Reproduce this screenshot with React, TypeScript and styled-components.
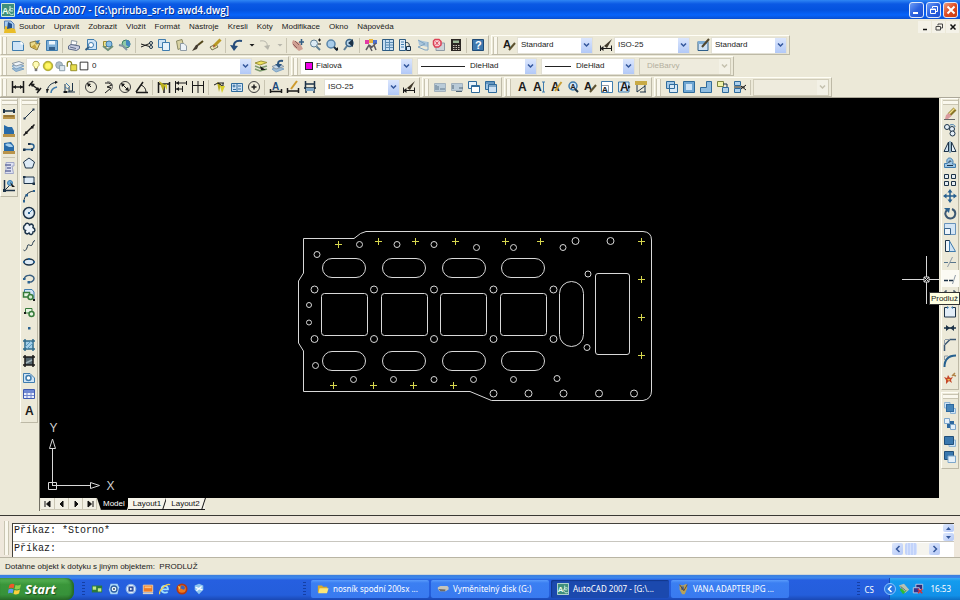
import React from "react";
import styled, { createGlobalStyle, css } from "styled-components";

const Global = createGlobalStyle`
  * { box-sizing: border-box; }
  body { margin: 0; background: #ece9d8; }
  button, select, input { font: inherit; color: inherit; margin: 0; }
`;

const ui = `"Noto Sans", "Open Sans", sans-serif`;
const classic = `"Liberation Sans", Arial, sans-serif`;

/* ---------- icons: 14 x 14 grid ---------- */
const N = "#1d3348";
const B = "#3f7cae";
const L = "#cfe4f6";
const K = "#1b1b1b";
const Y = "#d9cf2a";
const G = "#8e9aa5";

const S = ({ d, c = N, w = 1, f = "none" }: { d: string; c?: string; w?: number; f?: string }) => (
  <path d={d} stroke={c} strokeWidth={w} fill={f} />
);
const F = ({ d, c = N }: { d: string; c?: string }) => <path d={d} fill={c} />;
const T = ({ x, y = 11, s = 12, c = K, children }: { x: number; y?: number; s?: number; c?: string; children: string }) => (
  <text x={x} y={y} fontSize={s} fill={c} fontFamily="Liberation Sans" fontWeight="700">{children}</text>
);
const C = ({ x, y, r, c = N, f = "none", w = 1 }: { x: number; y: number; r: number; c?: string; f?: string; w?: number }) => (
  <circle cx={x} cy={y} r={r} stroke={c} strokeWidth={w} fill={f} />
);

const icons: Record<string, React.ReactNode> = {
  new: <><S d="M1.5 3.5H10L12.5 6V12.5H1.5Z" c={B} f={L} /><F d="M9.5 3L13 6.5H9.5Z" c="#fff" /></>,
  open: <><S d="M2 4.5L8 3V6L12 5L9 12L2.5 9Z" c="#8b7a3a" f="#eadb8c" /><F d="M7 3L12 2L10 6Z" c={B} /><F d="M3 9L7 6L9 11Z" c="#c9a63b" /></>,
  save: <><S d="M1.5 2.5H12.5V12.5H1.5Z" c={B} f="#7fb0d8" /><F d="M4 3H10V6.5H4Z" c="#eef6fd" /><F d="M4 9H10V12H4Z" c="#35618d" /></>,
  print: <><S d="M4.5 2.5L10 3.5L9 7H4Z" c={G} f="#fff" /><S d="M1.5 8L4 6.5L12.5 8V10.5L9.5 12.5L1.5 11Z" c="#5d6b88" f="#c8cce0" /><S d="M3 9L9 10.5" c="#5d6b88" /></>,
  preview: <><S d="M3.5 1.5H10L12.5 4V11.5H3.5Z" c={B} f={L} /><C x={7} y={7} r={2.5} c={B} f="#fff" /><S d="M5 9L1.5 12" w={2} c="#345d80" /></>,
  publish: <><S d="M2.5 3.5H10V8.5H2.5Z" c="#9b8b31" f="#efe38b" /><C x={8} y={6} r={3} c={B} f="#8ac0e5" /><S d="M2 8L7 12L12 8" w={2} c="#6d8f79" /></>,
  web: <><C x={8} y={6} r={4} c="#3d7f68" f="#8fc9a8" /><F d="M8 2A4 4 0 0 1 11 9L8 7Z" c="#4487c0" /><S d="M1 7L5 8L9 12" w={2} c="#8396a3" /></>,
  cut: <><C x={11} y={5} r={1.5} /><C x={11} y={9} r={1.5} /><S d="M9.5 5.5L1 9M9.5 8.5L1 6" c={K} /></>,
  copy: <><S d="M1.5 1.5H8.5V9.5H1.5Z" c={B} f={L} /><S d="M5.5 4.5H12.5V12.5H5.5Z" c={B} f="#e7f2fb" /></>,
  paste: <><S d="M2.5 3L8 1.5L10 9L4 11.5Z" c="#8c8b63" f="#d8d2a2" /><S d="M6.5 5.5H10L12.5 8V12.5H6.5Z" c={G} f="#edf3f8" /></>,
  brush: <><S d="M12 3L7 7" w={2} c="#53461b" /><F d="M8 6L6 11L1 13L5 7Z" c="#443c31" /></>,
  blockEdit: <><S d="M2 9L8 6L10 9L4 12Z" c="#74704c" f="#ede9ba" /><S d="M12.5 1.5L6 8" w={3} c="#b99922" /><F d="M5 8L7 7L6 10Z" c="#933" /></>,
  undo: <><S d="M12 3C5 2 3 5 4 11" c="#274d7b" w={2} /><F d="M0 7L8 8L4 13Z" c="#274d7b" /></>,
  redo: <><S d="M2 3C8 2 10 5 9 10" c="#b7b6ab" /><F d="M6 8L12 7L10 12Z" c="#b7b6ab" /></>,
  down: <F d="M4.5 6H9.5L7 8.5Z" c={K} />,
  downOff: <F d="M4.5 6H9.5L7 8.5Z" c="#b7b6ab" />,
  pan: <><F d="M2 2L9 5L12 11L8 13L3 9L1 5Z" c="#cf9f92" /><S d="M4 3L8 7M2 6L6 10" c="#8e5e5c" /><S d="M10.5 1V7M8 4H13" c="#335d83" w={1.5} /></>,
  zoomRt: <><C x={6} y={5.5} r={3.5} c="#5f7f95" f="#dcebf5" /><S d="M8.5 8.5L12 12" w={2} c="#5f7f95" /><S d="M10 2H13M11.5 .5V3.5M10 6H13" c={K} /></>,
  zoomWin: <><C x={6} y={6} r={4} c="#5b86aa" f="#a9cdea" w={1.5} /><S d="M9 9L12.5 12.5" w={2} /><F d="M10 12H13V9Z" c={K} /></>,
  zoomPrev: <><C x={7.5} y={5} r={3.5} c="#3b668a" f="#bcd9ee" w={1.5} /><S d="M5 8L2 12" w={2} c="#5f7f95" /><F d="M6 5L11 1V9Z" /></>,
  props: <><F d="M1 2H5V6H1Z" c="#e33aa6" /><F d="M5 1H9V5H5Z" c="#e8b53e" /><F d="M9 2H13V6H9Z" c="#4b6fd0" /><S d="M2 12L5 7L8 9L12 5M5 7L8 13M10 7L12 12" c="#5d5a60" w={1.5} /></>,
  design: <><S d="M1.5 1.5H12.5V12.5H1.5Z" c="#2c5b82" f="#c5ddf1" /><S d="M4.5 2V12M4.5 4.5H12M4.5 7H12M4.5 9.5H12M8.5 2V12" c="#5a8cb4" /></>,
  palettes: <><S d="M1.5 1.5H7.5V12.5H1.5Z" c="#2c5b82" f="#dcebf7" /><S d="M3 4H6M3 6.5H6M3 9H6" c={B} /><S d="M7 4.5C12 4 12 7 10 11" /><S d="M8.5 8.5H12.5V12.5H8.5Z" f="#cfe4f6" /></>,
  sheet: <><F d="M3 2L13 4V9L4 7Z" c="#a9c5db" /><S d="M3 2L10 6L3 9L10 12H13V4" c="#7ea3c0" /></>,
  markup: <><S d="M4 5H12.5V12.5H4Z" c={G} f="#cdd4d8" /><S d="M3 1.5H7L9 3.5V7L6.500 9H3L1.5 6.5V3Z" c="#dc4055" f="#fad1d5" w={1.5} /><S d="M3.5 3.5L6.500 7M6.500 3.500L3.500 7" c="#dc4055" /></>,
  calc: <><F d="M2 1H12V13H2Z" c="#2b2724" /><F d="M4 2.5H10V5H4Z" c="#9fbb9a" /><S d="M4 7.5H10.5M4 9.5H10.5M4 11.5H10.5" c="#c9c2b8" /><S d="M6 6V13M8.5 6V13" c="#2b2724" /></>,
  help: <><S d="M1.5 1.5H12.5V12.5H1.5Z" c="#1f4b77" f="#3f79ae" /><T x={4} y={11} s={11} c="#fff">?</T></>,
  styleA: <><T x={1} y={10} s={11}>A</T><S d="M13 5L7 12" w={2} c="#5c5230" /></>,
  dimStyle: <><S d="M1 10.5H13M1.5 7.5V13M12.5 7.5V13" c={K} /><F d="M13 1L5 8L8 10Z" c="#3f382a" /><F d="M1 10.5L4.5 8V13Z" c={K} /></>,
  tableStyle: <><S d="M2 3.5H12V12.5H2Z" c="#2d5e8a" f="#cfe2f3" /><F d="M2 3H12V6H2Z" c="#7fadd4" /><S d="M13 1L6 9" w={2} c="#51482f" /></>,
  layers: <><S d="M1 9.5L5 12.5L13 10L8 8Z" c="#7ea3c4" f="#9bbbd6" /><S d="M1 7L5 10L13 7L8 5Z" c="#7ea3c4" f="#c7dbed" /><S d="M1 4.5L5 7L13 4.5L8 2.5Z" c={G} f="#eff5fa" /></>,
  layerPrev: <><S d="M1 10L5 13L13 10L8 8Z" c="#7ea3c4" f="#9bbbd6" /><S d="M1 7.5L5 10L13 7.5L8 5Z" c={G} f="#c7dbed" /><S d="M12 2C7 1 6 4 8 7" c="#2d5680" w={2} /><F d="M4 5L11 5L8 9Z" c="#2d5680" /></>,
  layerCur: <><S d="M1 4L6 6L13 3.5L7 2Z" c="#9b943c" f="#f1e35c" /><S d="M1 7L6 9L13 7M1 10L6 12L13 10" c="#7c9a6d" w={1.5} /><F d="M6 7L12 11H7Z" c={K} /></>,
  bulb: <><S d="M7 1.5A3.5 3.5 0 0 1 9 8L8.5 10H5.5L5 8A3.5 3.5 0 0 1 7 1.5Z" c="#a79d45" f="#fffdb6" /><F d="M5.500 10H8.500V13H5.500Z" c="#777" /></>,
  sun: <><C x={7} y={7} r={5.5} c="#a9a127" f="#c7bf38" /><C x={7} y={7} r={3.5} c="#f8ef47" f="#fff66a" /></>,
  vpFreeze: <><C x={6} y={6} r={4} c="#8b9ca8" f="#aebfca" /><S d="M6.5 6.5H12.5V12.5H6.5Z" c="#7f94a4" f="#dce6ed" /></>,
  lock: <><S d="M1.5 8V4A2 2 0 0 1 6.5 4V6" c="#8a841f" w={1.5} /><S d="M5.5 5.5H12.5V12.5H5.5Z" c="#8a841f" f="#e7dc4b" /></>,
  layColor: <S d="M2.5 2.5H11.5V11.5H2.5Z" c={K} f="#fff" />,

  dimLinear: <><S d="M1.5 1V13M12.5 1V13M2 7H12" c={K} w={1.5} /><F d="M2 7L5 5V9ZM12 7L9 5V9Z" c={K} /></>,
  dimAligned: <><S d="M1 6L5 1M9 13L13 8M3 4L11 10" c={K} w={1.5} /><F d="M2 3L7 4L4 7ZM12 11L7 10L10 7Z" c={K} /></>,
  dimArc: <><S d="M2 13C2 6 6 3 12 2" /><S d="M6 13C6 10 8 8 12 7" c={B} w={1.5} /><F d="M1 9L4 9L2 13ZM10 1L13 2L10 4Z" c={K} /></>,
  dimOrd: <><S d="M3 4V12M1 12H13M7 7V12M10.500 3V11H7" /><S d="M4 3L8 7M3 7L6 9" c={B} /><F d="M2 11H5V13H2Z" c={K} /></>,
  dimRad: <><C x={7} y={7} r={5.5} c="#3b3b3b" /><S d="M7 7L3.5 3.5" c={K} /><F d="M3 3L7 4L4 7Z" c={K} /></>,
  dimJog: <><S d="M4 3H8L11 5L6 7L10 8L4 13" c={K} /><S d="M6 2C12 1 13 8 9 11" c="#555" /></>,
  dimDia: <><C x={7} y={7} r={5.5} c="#3b3b3b" /><S d="M3.5 3.5L10.5 10.5" c={K} /><F d="M3 3L7 4L4 7ZM11 11L7 10L10 7Z" c={K} /></>,
  dimAng: <><S d="M1 12.5H13M1 12L8 2" c={K} w={1.5} /><S d="M6 5C9 6 11 9 11 12" c={K} /></>,
  quickDim: <><S d="M1.5 2V13M12.5 2V13M7 5V13M2 4H12" c={K} w={1.5} /><F d="M2 1L8 5L6 11Z" c="#b9ae1c" /><F d="M7 5L10 4L10 10Z" c={Y} /></>,
  dimBase: <><S d="M1.5 1V13M12.5 1V5M2 3H12M2 9H8M8.5 6V12" c={K} /><F d="M2 9L5 7V11ZM2 3L5 1V5Z" c={K} /></>,
  dimCont: <S d="M1.5 1V13M7 1V13M12.5 1V13M2 5.5H12" c={K} />,
  leader: <><F d="M4 2L8 4L6 12Z" c="#b9ae1c" /><S d="M1 5L5 3L11 7M10 3V7M5 3L11 3" c={K} /><F d="M7 6L12 6L9 13Z" c={Y} /></>,
  tol: <><S d="M1.5 3.5H12.5V11.5H1.5ZM7 3.5V11.5" c="#2f6b9c" f="#cfe2f4" /><C x={4} y={6} r={1} c="#2f6b9c" /><S d="M3 9.5H6M8 6H11M8 9H11" c="#2f6b9c" /></>,
  centre: <><C x={7} y={7} r={5.5} c="#3b3b3b" /><S d="M7 4.5V9.5M4.5 7H9.5" c={K} w={1.5} /></>,
  dimEdit: <><T x={3} y={10} s={10} c="#1b4a7d">A</T><S d="M1 11.5H13M1.5 9V13M12.5 9V13" c={K} w={1.5} /></>,
  dimTedit: <><S d="M1.5 8V13M12.5 8V13M1 11H13" c={K} w={1.5} /><S d="M11 1L5 9" c="#cf9b2c" w={2} /></>,
  dimUpd: <><S d="M2.5 1V9M11.5 1V9M2 4H12M1 8H13M3 8V13M11 8V13" w={1.5} /><F d="M3 8H11V11H3Z" c="#7ea6c6" /></>,
  grpA: <><S d="M1.5 3.5H12.5V11.5H1.5Z" c="#a3b2bd" f="#b9cbd8" /><S d="M3 5V10M5 6V10M7 9H12" c="#60798c" /></>,
  grpB: <><S d="M1.5 3.5H12.5V10.5H1.5Z" c="#a3b2bd" f="#b9cbd8" /><S d="M3 5V9M6 11.5H12M9 8H13" c="#4f6476" /></>,
  grpC: <><S d="M1.5 1.5H9.5V8.5H1.5Z" c="#2f6b9c" f="#e6f1fa" /><S d="M4.5 5.5H12.5V12.5H4.5Z" c="#2f6b9c" f="#fff" /><S d="M5 6.5H12" c="#2f6b9c" /></>,
  grpD: <><S d="M1.5 1.5H10.5V9.5H1.5Z" c="#2f6b9c" f="#9ec3e2" /><S d="M4.5 4.5H12.5V12.5H4.5Z" c="#2f6b9c" f="#cde1f2" /><S d="M5 6H12M1.500 3H10" c="#2f6b9c" /></>,
  text: <T x={3} y={11} s={12}>A</T>,
  textLine: <><T x={1} y={11} s={12}>A</T><S d="M11.5 2V12M10 2H13M10 12H13" c={B} /></>,
  textEdit: <><T x={2} y={11} s={12}>A</T><S d="M12.5 2L6 11" c="#c9a035" w={2} /></>,
  textFind: <><C x={7} y={6} r={4} c={B} f={L} w={1.5} /><S d="M9 9L12 12" w={2} /><T x={4.5} y={9} s={7}>A</T></>,
  textScale: <><S d="M1.5 1.5H12.5V12.5H1.5Z" c={B} f="#fff" /><S d="M2 5.5H8.500V12" c={G} /><T x={2} y={12} s={8}>A</T></>,
  textJust: <><S d="M1.5 2V12H12V2Z" c={B} f="#dceaf6" /><T x={3} y={11} s={12}>A</T><F d="M11 5V9L13.500 7Z" c={K} /></>,
  spaceTr: <><F d="M1 1H13V5H1Z" c="#c8aa45" /><S d="M3 5V12M11 5V12M3 12L11 6M6 12H12" /></>,
  cornerA: <><S d="M1.5 1.5H9.5V8.5H1.5Z" c="#2f6b9c" f="#a3c9e8" /><S d="M4.5 4.5H12.5V12.5H4.5Z" c="#2f6b9c" f="#d8e9f7" /><S d="M4.5 8.500H9.500V4.500" c="#2f6b9c" /></>,
  box: <><S d="M1.5 1.5H12.5V12.5H1.5Z" c="#2f6b9c" f="#6fa6d3" /><F d="M4 4H10V10H4Z" c="#cde3f6" /></>,
  boxL: <S d="M7.5 1.5H12.5V12.5H1.5V7.5H7.5Z" c="#2f6b9c" f="#8ebce0" />,
  blkA: <><S d="M1.5 1.5H7.5V6.5H1.5Z" c="#7c8340" f="#f0f2a8" /><S d="M7 4H11V8" /><S d="M6.5 7.5H12.5V12.5H6.5Z" c="#2f6b9c" f="#aed0ec" /></>,
  blkB: <><S d="M1.5 1.5H7.5V5.5H1.5ZM1.5 8.5H7.5V12.5H1.5Z" c="#2f6b9c" f="#aed0ec" /><S d="M1 7H12M8 6L13 10M8 9L13 5" c={K} /></>,

  distance: <><S d="M1 4H13" w={1.5} /><F d="M1 2H3V6H1ZM11 2H13V6H11Z" /><F d="M1 8H13V12H1Z" c="#b9944a" /><S d="M3 8V10M5 8V10M7 8V10M9 8V10M11 8V10" c="#7b5b1e" /></>,
  area: <><F d="M2 10V1L6 3H10L12 7V10Z" c="#286ba9" /><F d="M1 10H13V13H1Z" c="#b9944a" /></>,
  mass: <><F d="M2 10V2L9 1L12 5V10Z" c="#286ba9" /><F d="M3 4C6 1 10 3 11 6L7 6Z" c="#a4cfee" /><F d="M1 10H13V13H1Z" c="#b9944a" /></>,
  list: <><S d="M4 1.5H12V5H10L11.5 12.5H3L4 8Z" c="#a0a7c8" f="#dfe2f2" /><S d="M3 4H9M5 7H9M3 10H9" c="#6870a0" w={1.5} /></>,
  locate: <><S d="M2.5 2V12.500H13" w={1.5} /><S d="M3 12L8 7" /><C x={8} y={5} r={2.5} c={B} f="#6fb0dc" /><F d="M8 4L13 9L10 9Z" c={K} /><F d="M1 11H4V14H1Z" /></>,
  line: <><S d="M2.5 11.5L11.5 2.5" /><F d="M1.5 10.5H3.5V12.5H1.5ZM10.5 1.5H12.5V3.5H10.5Z" /></>,
  xline: <><S d="M1.5 12.5L12.5 1.5" c={K} w={1.5} /><F d="M3 8.500H5.500V11H3ZM9 3H11.500V5.500H9Z" c={K} /></>,
  pline: <><S d="M2 9.5H9C13 9 13 4 9 4H7" c="#2b6290" w={1.5} /><F d="M1 8.5H3.5V11H1ZM6 3H8.5V5H6ZM9 8.5H11V11H9Z" /></>,
  polygon: <S d="M7 2L12.5 6L10.5 12H3.5L1.5 6Z" f="#deebf6" />,
  rect: <><S d="M2 4H12V10.5H2Z" f="#deebf6" /><F d="M1 3H3.5V5H1ZM10.5 9.5H13V12H10.5Z" /></>,
  arc: <><S d="M2 12.5C2 7 6 2.5 12 2" /><F d="M1 11H3V13.5H1ZM3.500 5H6V7.500H3.500ZM11 1H13V3H11Z" c="#2b6290" /></>,
  circle: <><C x={7} y={7} r={5.5} f="#deebf6" w={1.5} /><S d="M7 7L10.500 3.500" c={B} /><F d="M6 6H8V8H6Z" c="#2b6290" /></>,
  cloud: <S d="M3 3C4 .5 7 1 7.5 3C10 1 12 3 11 5.5C14 7 13 10 11 10C11 13 8 13.5 7 11C5 13 2 11 3.5 8.5C1 8 1 4 3 3Z" f="#edf4fa" w={1.5} />,
  spline: <S d="M1.5 11C3 13 5 10 5.5 7C6 4 9 8 10 6C11 4 11 2 13 1.5" />,
  ellipse: <><ellipse cx="7" cy="7" rx="5" ry="3" stroke={N} strokeWidth="1.5" fill="#deebf6" /><F d="M1 6H3V8H1ZM11 6H13V8H11ZM6 3H8V5H6Z" c="#2b6290" /></>,
  ellArc: <><S d="M2.5 7C2 2.5 12 2 12 6.5C12 9 9 10.5 7 10" w={1.5} c="#3a5f80" /><F d="M1 6H3.500V8H1ZM5.500 9H8V11.500H5.500Z" c="#2b6290" /></>,
  insBlk: <><S d="M2.5 5.500V1.500H10L12 4V12" c={B} f={L} /><S d="M1.5 4.5H7.5V9H1.5Z" c="#367b3a" f="#e7f4e3" w={1.5} /><C x={8.5} y={9} r={2.5} c="#367b3a" f="#d3ebcf" w={1.5} /><F d="M11 11H13V13H11Z" c={K} /></>,
  mkBlk: <><S d="M3.5 3.5H10V8H3.5Z" c="#367b3a" f="#e7f4e3" /><C x={9.5} y={9} r={2.5} c="#367b3a" f="#e7f4e3" w={1.5} /><F d="M2 7H4V9H2Z" c={K} /></>,
  point: <F d="M6 6H8.500V8.500H6Z" c="#2b6290" />,
  hatch: <><F d="M3 3H11V11H3Z" c="#a5d0ea" /><S d="M3 1V13M11 1V13M1 3H13M1 11H13" c="#2f6b8c" w={1.5} /><S d="M3 9L9 3M5 11L11 5" c="#5d9dbf" /></>,
  gradient: <><F d="M3 3H11V11H3Z" c="#52636c" /><S d="M3 1V13M11 1V13M1 3H13M1 11H13" c={K} w={1.5} /><S d="M4 9L10 6" c="#a1b3ba" w={1.5} /></>,
  region: <><S d="M1.5 2.500H8L12.500 7V11.500H1.500Z" c={B} f={L} /><C x={6.5} y={7} r={2.5} c={B} f="#fff" w={1.5} /></>,
  table: <><S d="M1.5 2.5H12.5V11.5H1.5Z" c="#405bb0" f="#e9eefc" /><F d="M2 3H12V5H2Z" c="#6f89d6" /><S d="M5 3V11M9 3V11M2 5.5H12M2 8.5H12" c="#7186cf" /></>,
  erase: <><S d="M12 2L6 8" c="#8a7628" w={4} /><S d="M11.5 1.5L6 7" c="#f3e089" w={1.5} /><F d="M3 8L6 6L8.5 9L5 12H2Z" c="#d99a9d" /><S d="M1 12.5H12" c="#666" /></>,
  copyObj: <><C x={4} y={4} r={2.5} f="#e4eef7" /><C x={9} y={6} r={2.5} f="#e4eef7" /><C x={9.5} y={10.5} r={2.5} f="#e4eef7" /><S d="M7 2C10 1 12 2 12 4" c={B} /></>,
  mirror: <><S d="M1 11.5L5.5 2V11.5Z" f="#cfe2f2" /><S d="M13 11.5L8.5 2V11.5Z" f="#e7f1f9" /><S d="M7 1V13" c={B} /></>,
  offset: <><S d="M1.5 11.5H12.5V8H9.5C11 5 9 2 6.5 2C4 2 3 5 4.5 7.5H1.5Z" c={B} f="#9dc5e4" /><S d="M4 9.5H10M6 7C5 5 8 4 8 6" /></>,
  array: <S d="M1.5 1.5H5.5V5.5H1.5ZM8.5 1.5H12.5V5.5H8.5ZM1.5 8.5H5.5V12.5H1.5ZM8.5 8.5H12.5V12.5H8.5Z" f="#e4ecf3" />,
  move: <><S d="M7 2V12M2 7H12" c="#265f8f" w={1.5} /><F d="M7 0L9.5 3.5H4.5ZM7 14L9.5 10.5H4.5ZM0 7L3.5 4.5V9.5ZM14 7L10.5 4.5V9.5Z" c="#265f8f" /></>,
  rotate: <><S d="M4 4C0 8 4 12.5 7.5 12.5C13 12 14 5 9 3" w={2} c="#3c5873" /><F d="M1 2L7 2L6 7Z" c="#2b6290" /></>,
  scale: <><S d="M1.5 1.5H12.5V12.5H1.5Z" c="#6893bb" f="#d5e6f5" /><S d="M1.5 6.5H7.5V12.5H1.5Z" c="#3a668f" f="#eef5fb" /></>,
  stretch: <><S d="M2.5 1.5H6.5V12.5H2.5Z" f="#eef5fb" /><S d="M6.5 2L12.500 12.500H6.500Z" c={B} f="#cfe2f2" /></>,
  trim: <><S d="M1 7.5H5M7 7.5H13" c="#58758c" /><S d="M4.5 12L9.5 2" c={G} /></>,
  extend: <><S d="M1 8.5H5M6 8.5H10" w={1.5} /><S d="M9.5 12L12.5 3" c={G} /></>,
  breakPt: <S d="M2 3H4M10 3H12M2 3V10H12V3" />,
  breakObj: <><S d="M4.5 2.5H1.5V12H12.5V2.5H9.5" f="#e2edf7" /><F d="M4 1L6 2.5L4 4ZM10 1L8 2.5L10 4Z" c={B} /></>,
  join: <><S d="M1 7H13" w={1.5} /><F d="M3 4L7 7L3 10ZM11 4L7 7L11 10Z" /></>,
  chamfer: <><S d="M1.500 13V7L7 1.500H13" w={1.5} c="#3c5873" /><S d="M2 1.500H7M1.500 2V7" c={G} /></>,
  fillet: <><S d="M1.5 13C1.5 6 5 1.5 13 1.5" c="#27618f" w={2} /><S d="M1.5 2H5M1.5 2V6" c={G} /></>,
  explode: <><F d="M1 6L4 7L5 4L7 7L10 6L8 9L9 12L6 10L3 13L3 9Z" c="#c5492b" /><F d="M4 8L7 8L6 10Z" c="#f4bf52" /><S d="M9 5L12 2M10 4L13 5" c="#b3864b" w={1.5} /></>,
  ordA: <><S d="M1.5 1.5H7V7H1.5ZM7.5 7.5H12.5V12.5H7.5Z" c="#8fb4d3" f={L} /><F d="M3 3H11V11H3Z" c="#2d699f" /><F d="M4 4H10V10H4Z" c="#4584b8" /></>,
  ordB: <><F d="M4 4H11V11H4Z" c="#2d699f" /><S d="M1.5 1.5H6.5V6.5H1.5ZM7.5 7.5H12.5V12.5H7.5Z" c="#7ea7ca" f="#e5f0f9" /></>,
  ordC: <><S d="M6 6H12.5V12.5H6Z" c="#8fb4d3" f={L} /><S d="M1.5 2.5H10.5V10.5H1.5Z" c="#214f79" f="#3a78ae" /></>,
  ordD: <><S d="M1.5 1.5H10.5V9.5H1.5Z" c="#214f79" f="#3a78ae" /><S d="M5 6H12.5V12.5H5Z" c="#7ea7ca" f="#e5f0f9" /></>,

  cad: <><S d="M.5 .5H13.5V13.5H.5Z" c="#cfe9da" f="#3f8f7c" /><T x={1} y={11} s={9} c="#e8fff4">A</T><S d="M9 3V8H12M12.5 6A3 3 0 1 0 12.5 11" c="#d9f5e6" /></>,
  doc: <><S d="M1.5 1H8L11 4V9H1.5Z" c="#5a7fb5" f="#a9cdf0" /><F d="M2 6L12 9L13 13H1Z" c="#e9bd27" /><F d="M5 2L9 4L9 8L4 9Z" c="#24508c" /></>,
  folder: <><F d="M1 3H6L7 4.5H12V11H1Z" c="#d9aa2d" /><F d="M3 6H13.5L11.5 12H1.5Z" c="#fbe678" /></>,
  disk: <><F d="M1 5L4 3.5H12L13.5 5V7.5L10 9.5H3L1 7Z" c="#c6c4bb" /><F d="M1.5 7L10 7.5L9.5 9.5H4Z" c="#6c6a66" /></>,
  photo: <><F d="M3 2L7 3L11 1L12 6L9 13H6L3 8Z" c="#b7a25b" /><F d="M5 4H8V8H5Z" c="#41639b" /><S d="M3 2L8 9L12 2" c="#5b3d24" /></>,
  qCad: <><F d="M1 3H13V11H1Z" c="#2c7a3a" /><F d="M2 4H6V8H2ZM8 6H12V10H8Z" c="#bfe889" /></>,
  qMail: <><F d="M3 1H11L13 5L11 13H3L1 8Z" c="#a7d4f5" /><C x={7} y={7} r={3.5} c="#2b5da0" f="#eef8ff" w={1.5} /><F d="M6 6H8V8H6Z" /></>,
  qMedia: <><C x={7} y={7} r={5.5} c="#8db5e8" f="#e9f2fc" w={1.5} /><F d="M4 4H10V10H4Z" c="#284b9c" /><F d="M6 5.5L9 7L6 8.5Z" c="#fff" /></>,
  qDesk: <><S d="M1.5 2.5H12.5V10.5H1.5Z" c="#fbd3a2" f="#ee7c28" /><F d="M3 4H11V6H3Z" c="#ffc17c" /><F d="M1 11H13V13H1Z" c="#d9d2c8" /></>,
  qIe: <><S d="M3 7.5H10.5C11 2 3 2 3 7.5C3 12 9 12 10 10" c="#9fe0ff" w={2} /><S d="M1 13C-1 9 9 0 13 2" c="#f1cf4c" w={1.5} /></>,
  qFox: <><C x={7} y={7} r={5.5} c="#b8380e" f="#ee7a1d" w={2} /><F d="M6 3C10 2 12 6 9 8L5 6Z" c="#3d62b8" /><F d="M2 3L5 5L4 8Z" c="#ffd14c" /></>,
  qShield: <><F d="M7 1L12 3V8L7 13L2 8V3Z" c="#8fc6ef" /><S d="M3 5L11 8M4 9L10 4" c="#fff" w={1.5} /></>,
  tUsb: <><F d="M1 3L7 1L13 8L8 12Z" c="#b8c2b4" /><F d="M2 8L4 6L8 10L11 8L6 13Z" c="#2dbb35" /><S d="M3 4L9 9" c="#4b6352" /></>,
  tNet: <><S d="M4.5 1.5H12.5V7.5H4.5Z" c="#c6d2ea" f="#2c2a77" /><S d="M1.5 5.5H8.5V11.5H1.5Z" c="#c6d2ea" f="#3b3088" /><S d="M7 7L12 12M12 7L7 12" c="#e02a2a" w={1.5} /></>,
};

const IconSvg = styled.svg`
  display: block;
  flex: none;
  width: 14px;
  height: 14px;
`;
const Icon = ({ name }: { name: string }) => (
  <IconSvg viewBox="0 0 14 14" aria-hidden="true">{icons[name]}</IconSvg>
);

/* ---------- frame ---------- */
const Window = styled.div`
  display: flex;
  flex-direction: column;
  min-height: 100vh;
  background: #ece9d8;
  color: #1a1a1a;
  font: 8px/12px ${ui};
`;

const TitleBar = styled.header`
  display: flex;
  align-items: center;
  height: 19px;
  padding: 0 2px 0 1px;
  gap: 2px;
  background: linear-gradient(#2f86f4 0, #0b59e4 4px, #0453df 10px, #0764fb 15px, #0a4fd0 19px);
`;
const Title = styled.h1`
  flex: 1;
  margin: 0;
  color: #fff;
  font: 600 10px/16px "Open Sans", sans-serif;
  text-shadow: 1px 1px 0 #0b3290;
  white-space: nowrap;
`;
const WinButton = styled.button<{ $close?: boolean }>`
  display: grid;
  place-items: center;
  width: 15px;
  height: 16px;
  padding: 0;
  border: 1px solid #dfe9fb;
  border-radius: 3px;
  background: ${(p) => (p.$close ? "linear-gradient(135deg, #f0a083, #dd4b22 50%, #c83a10)" : "linear-gradient(135deg, #6f9df5, #2b62e0 50%, #1c4fce)")};
`;
const WinButtons = styled.div`
  display: flex;
  gap: 2px;
`;

const MenuBar = styled.nav`
  display: flex;
  align-items: center;
  height: 16px;
  padding: 0 1px 0 3px;
  font-family: ${classic};
`;
const MenuItem = styled.button`
  padding: 0;
  margin-left: 9px;
  border: 0;
  background: none;
  line-height: 14px;
  &:first-of-type { margin-left: 2px; }
`;
const Spacer = styled.div`
  flex: 1;
`;
const MdiButton = styled.button`
  display: grid;
  place-items: center;
  width: 13px;
  height: 12px;
  margin-left: 1px;
  padding: 0;
  border: 0;
  background: #f4f2e8;
`;

/* ---------- toolbars ---------- */
const ToolRows = styled.div`
  display: grid;
  grid-auto-rows: 20px;
  row-gap: 1px;
  border-bottom: 1px solid #aca899;
`;
const ToolRow = styled.div`
  display: flex;
  gap: 2px;
`;
const barEdge = css`
  border: 1px solid;
  border-color: #fffef6 #bdb9a6 #bdb9a6 #fffef6;
`;
const Toolbar = styled.div<{ $vertical?: boolean }>`
  ${barEdge}
  display: flex;
  align-items: center;
  align-self: flex-start;
  flex-direction: ${(p) => (p.$vertical ? "column" : "row")};
  ${(p) => (p.$vertical ? "width: 18px; padding-bottom: 3px;" : "height: 20px; padding-right: 2px;")}
`;
const Grip = styled.span<{ $vertical?: boolean }>`
  flex: none;
  ${(p) => (p.$vertical ? "width: 15px; height: 5px; margin: 1px 0 0;" : "width: 5px; height: 17px; margin: 0 2px 0 1px;")}
  border: solid #c9c5b2;
  border-width: ${(p) => (p.$vertical ? "1px 0" : "0 1px")};
  background: #faf8ee;
`;
const Divider = styled.span<{ $vertical?: boolean }>`
  flex: none;
  background: #c9c5b2;
  ${(p) => (p.$vertical ? "width: 12px; height: 1px; margin: 1px 0;" : "width: 1px; height: 15px; margin: 0 2px;")}
`;
const ToolButton = styled.button<{ $slim?: boolean; $hot?: boolean }>`
  display: grid;
  place-items: center;
  flex: none;
  width: ${(p) => (p.$slim ? 11 : 17)}px;
  height: 17px;
  padding: 0;
  overflow: hidden;
  border: 0;
  background: ${(p) => (p.$hot ? "#fbfaf3" : "none")};
`;
const ToolStack = styled.div`
  display: flex;
  flex-direction: column;
  ${ToolButton}:nth-child(even) { height: 16px; }
`;

const ComboBox = styled.label<{ $w: number; $off?: boolean; $lead?: boolean; $tight?: boolean }>`
  display: flex;
  align-items: center;
  flex: none;
  width: ${(p) => p.$w}px;
  height: 17px;
  margin-right: ${(p) => (p.$tight ? 0 : 4)}px;
  margin-left: ${(p) => (p.$lead ? 6 : 0)}px;
  padding-left: ${(p) => (p.$off ? 7 : 3)}px;
  border: 1px solid ${(p) => (p.$off ? "#d0ccb9" : "#e2e0d4")};
  background: ${(p) => (p.$off ? "#eeebdd" : "#fff")};
  color: ${(p) => (p.$off ? "#b3af9d" : "#1a1a1a")};
  font-family: ${classic};
  &:last-child { margin-right: 0; }
`;
const Select = styled.select`
  flex: 1;
  min-width: 0;
  height: 15px;
  padding: 0;
  border: 0;
  outline: 0;
  appearance: none;
  background: none;
  font-size: 8px;
  opacity: 1;
`;
const Arrow = styled.span<{ $off?: boolean }>`
  display: grid;
  place-items: center;
  width: 11px;
  height: 15px;
  background: ${(p) => (p.$off ? "#f3f1e6" : "linear-gradient(#dbe6fd, #b2c9f7)")};
  pointer-events: none;
`;
const Swatch = styled.span`
  width: 8px;
  height: 8px;
  margin: 0 3px 0 1px;
  border: 1px solid #222;
  background: #f000e8;
`;
const LineSample = styled.span<{ $w: number }>`
  width: ${(p) => p.$w}px;
  height: 1px;
  margin-right: 5px;
  background: #222;
`;
const LayerStates = styled.span`
  display: flex;
  margin-right: 2px;
  ${IconSvg} { width: 12px; height: 12px; }
`;
const Chevron = ({ off }: { off?: boolean }) => (
  <svg width="7" height="5" viewBox="0 0 7 5" aria-hidden="true">
    <path d="M1 .5L3.5 3L6 .5" fill="none" stroke={off ? "#c5c1ae" : "#34579c"} strokeWidth="1.5" />
  </svg>
);
type ComboProps = { w: number; value: string; label: string; off?: boolean; lead?: boolean; tight?: boolean; children?: React.ReactNode };
const Combo = ({ w, value, label, off, lead, tight, children }: ComboProps) => (
  <ComboBox $w={w} $off={off} $lead={lead} $tight={tight}>
    {children}
    <Select aria-label={label} disabled={off}><option>{value}</option></Select>
    <Arrow $off={off}><Chevron off={off} /></Arrow>
  </ComboBox>
);

const Tools = ({ names, vertical }: { names: string; vertical?: boolean }) => (
  <>
    {names.split(" ").map((n, i) =>
      n === "|" ? <Divider key={i} $vertical={vertical} /> : (
        <ToolButton key={i} aria-label={n} $slim={n.startsWith("down")} $hot={n === "extend"}><Icon name={n} /></ToolButton>
      ),
    )}
  </>
);

/* ---------- workspace ---------- */
const Workspace = styled.main`
  display: flex;
  flex: 1;
  min-height: 0;
`;
const Dock = styled.aside<{ $right?: boolean }>`
  display: flex;
  flex: none;
  flex-direction: ${(p) => (p.$right ? "column" : "row")};
  gap: 2px;
  width: ${(p) => (p.$right ? 21 : 39)}px;
  padding-left: ${(p) => (p.$right ? 2 : 0)}px;
`;
const Center = styled.div`
  display: flex;
  flex: 1;
  flex-direction: column;
  min-width: 0;
  border-left: 1px solid #716f64;
`;
const Canvas = styled.svg`
  display: block;
  flex: 1 1 0;
  width: 100%;
  min-height: 200px;
  background: #000;
`;
const TipAnchor = styled.div`
  position: relative;
`;
const Tip = styled.div`
  position: absolute;
  z-index: 2;
  right: 0;
  top: 194px;
  padding: 0 1px;
  border: 1px solid #333;
  background: #ffffe1;
  font-family: ${classic};
  line-height: 11px;
`;

const TabStrip = styled.div`
  display: flex;
  height: 13px;
  padding-left: 1px;
`;
const NavButton = styled.button`
  display: grid;
  place-items: center;
  width: 14px;
  height: 12px;
  padding: 0;
  border: solid #cbc7b5;
  border-width: 0 1px 1px 0;
  background: #f2f0e4;
`;
const Tab = styled.button<{ $active?: boolean }>`
  position: relative;
  height: 12px;
  padding: 0 5px;
  border: 0;
  border-bottom: 1px solid #222;
  background: ${(p) => (p.$active ? "#000" : "#f6f4ea")};
  color: ${(p) => (p.$active ? "#fff" : "#111")};
  font: 8px/11px ${classic};
  ${(p) => p.$active && "clip-path: polygon(0 0, 100% 0, calc(100% - 4px) 100%, 4px 100%); margin-right: -3px; padding: 0 6px;"}
  &::after {
    content: "";
    position: absolute;
    top: 0;
    right: 1px;
    height: 12px;
    border-right: 1px solid #111;
    transform: skewX(-18deg);
  }
`;

/* ---------- command line ---------- */
const Command = styled.section`
  display: flex;
  height: 47px;
  padding: 7px 6px 2px 4px;
  gap: 3px;
  border-bottom: 1px solid #b9b5a4;
  background: linear-gradient(#ece9d8 4px, #3b3935 4px, #3b3935 5px, #efe8dc 5px);
`;
const CommandGrip = styled.span`
  width: 5px;
  margin-top: 3px;
  border: solid #c9c5b2;
  border-width: 0 1px;
  background: #faf8ee;
`;
const CommandBox = styled.div`
  display: grid;
  flex: 1;
  grid-template-rows: 18px 16px;
  margin-top: 5px;
  height: 34px;
  border: solid #44423c;
  border-width: 1px 0 0 1px;
  background: #fff;
  font: 10px/14px "Liberation Mono", monospace;
`;
const CommandLine = styled.div`
  display: flex;
  align-items: flex-start;
  &:first-child { border-bottom: 1px solid #c8c6bf; }
`;
const History = styled.span`
  flex: 1;
  padding-left: 1px;
  white-space: pre;
`;
const Prompt = styled.label`
  padding-left: 1px;
`;
const PromptInput = styled.input`
  flex: 1;
  min-width: 0;
  height: 14px;
  padding: 0 0 0 6px;
  border: 0;
  outline: 0;
  background: none;
`;
const Stepper = styled.span`
  display: grid;
  grid-template-rows: 8px 8px;
  width: 11px;
  gap: 1px;
`;
const ScrollButton = styled.button`
  display: grid;
  place-items: center;
  width: 11px;
  padding: 0;
  border: 0;
  border-radius: 2px;
  background: linear-gradient(135deg, #dde7fd, #b4c8f6);
`;
const HScroll = styled.span`
  display: flex;
  justify-content: space-between;
  width: 48px;
  height: 12px;
  margin: 1px 14px 0 0;
  background: #f5f4ee;
`;
const HThumb = styled.span`
  width: 12px;
  margin-right: 12px;
  margin-left: 2px;
  border-radius: 2px;
  background: repeating-linear-gradient(90deg, #c2d3fa 0 2px, #d5e1fc 2px 3px);
`;

const StatusBar = styled.footer`
  height: 17px;
  padding: 3px 5px;
  border-bottom: 1px solid #cfd6d8;
  background: #ece9d8;
  font: 8px/12px ${classic};
  white-space: pre;
`;

/* ---------- taskbar ---------- */
const Taskbar = styled.div`
  display: flex;
  align-items: stretch;
  height: 25px;
  padding-top: 3px;
  background: linear-gradient(#3b7fdc 0, #3c86ee 3px, #265fe0 5px, #245edb 20px, #1a48b4 25px);
  color: #fff;
`;
const Start = styled.button`
  display: flex;
  align-items: center;
  gap: 3px;
  width: 74px;
  padding: 0 0 0 8px;
  border: 0;
  border-radius: 0 8px 8px 0;
  background: linear-gradient(#5cb85a, #3a963a 30%, #37923a 75%, #2a6e2a);
  box-shadow: inset -2px 0 3px #246524;
  color: #fff;
  font: italic 700 13px/20px "Open Sans", sans-serif;
  text-shadow: 1px 1px 1px #1e4f1e;
`;
const Dots = styled.span`
  flex: none;
  width: 3px;
  margin: 4px 5px 4px 8px;
  background: repeating-linear-gradient(#153fa5 0 1px, transparent 1px 3px);
`;
const QuickLaunch = styled.div`
  display: flex;
  align-items: center;
  flex: none;
  width: 205px;
  gap: 3px;
`;
const QuickButton = styled.button`
  padding: 0 1px;
  width: 14px;
  border: 0;
  background: none;
  & ${IconSvg} { width: 12px; height: 12px; }
`;
const TaskList = styled.div`
  display: flex;
  flex: 1;
  gap: 2px;
  padding: 2px 0 2px;
`;
const Task = styled.button<{ $active?: boolean }>`
  display: flex;
  align-items: center;
  flex: 0 1 118px;
  min-width: 0;
  gap: 4px;
  padding: 0 6px;
  border: 0;
  border-radius: 2px;
  background: ${(p) => (p.$active ? "#1b49ae" : "linear-gradient(#5a9bfb, #3b7ff2 3px, #397af0)")};
  box-shadow: ${(p) => (p.$active ? "inset 1px 1px 1px #12378c" : "none")};
  color: #fff;
  white-space: nowrap;
  & ${IconSvg} { width: 12px; height: 12px; }
`;
const Language = styled.button`
  padding: 2px 15px 0 0;
  border: 0;
  background: none;
`;
const Tray = styled.div`
  display: flex;
  align-items: center;
  gap: 2px;
  width: 71px;
  padding-right: 9px;
  border-left: 1px solid #174bb5;
  background: linear-gradient(#3cabf2, #149cee 3px, #1190e8 80%, #0d6fc4);
  & ${IconSvg} { width: 12px; height: 12px; }
`;
const TrayToggle = styled.button`
  display: grid;
  place-items: center;
  width: 12px;
  height: 12px;
  margin-left: -6px;
  padding: 0;
  border: 1px solid #8cc6ff;
  border-radius: 6px;
  background: #2a7ae4;
`;
const Clock = styled.time`
  margin-left: auto;
`;

/* ---------- drawing data ---------- */
const slotX = [322.5, 382.5, 442.5, 501.5];
const boreX = [321.5, 381.5, 440.5, 500.5];
const holes: [number, number, number][] = [
  [317, 254.5, 3], [359.5, 244.5, 3], [397, 244.5, 3], [434, 244.5, 3], [476.5, 247.5, 3], [513.5, 247.5, 3],
  [563, 247.5, 3], [575.5, 241, 3.5], [610.5, 241, 3.5], [588, 274, 3], [587, 347.5, 3], [315.5, 365.5, 3],
  [309, 305, 2.5], [309, 322.5, 2.5], [353.5, 379.5, 3], [393.5, 379.5, 3], [434, 379.5, 3], [473.5, 379.5, 3],
  [513.5, 379.5, 3], [557, 378.5, 3],
  ...[314.5, 374, 434, 493.5, 553.5].flatMap((x) => [[x, 289.5, 3.5], [x, 339, 3.5]] as [number, number, number][]),
  ...[493.5, 528.5, 563.5, 599, 634].map((x) => [x, 393.5, 3.5] as [number, number, number]),
];
const marks = [
  [338.5, 244.5], [378.5, 241.5], [415.5, 241.5], [455.5, 241.5], [505.5, 241.5], [540.5, 241.5], [641.5, 241.5], [641.5, 279.5],
  [641.5, 317.5], [641.5, 355.5], [333.5, 385.5], [373.5, 385.5], [413.5, 385.5], [453.5, 385.5],
];

const Drawing = () => (
  <Canvas viewBox="40 98 899 400" role="img" aria-label="Gasket drawing">
    <g fill="none" stroke="#d8d8d8">
      <path d="M303.5 238.5H354Q361 232 366 231.5H643Q651.5 232 651.5 240V391Q651.5 399 643 400.5H491.5L470 391.5H303.5V351L298.5 343V281L303.5 273Z" />
      {slotX.map((x) => (
        <g key={x}>
          <rect x={x} y="258.5" width="43" height="19" rx="9.5" />
          <rect x={x} y="351.5" width="43" height="19" rx="9.5" />
        </g>
      ))}
      {boreX.map((x) => <rect key={x} x={x} y="293.5" width="46" height="42" rx="3" />)}
      <rect x="559.5" y="281.5" width="24" height="65" rx="12" />
      <rect x="595.5" y="273.5" width="34" height="81" rx="2.5" />
      {holes.map(([x, y, r]) => <circle key={`${x}-${y}`} cx={x} cy={y} r={r} />)}
      <path stroke="#d6d64e" d={marks.map(([x, y]) => `M${x - 3.5} ${y}h7M${x} ${y - 3.5}v7`).join("")} />
      <path d="M926.5 256V277M926.5 282V304M902 279.5H924M929 279.5H939M924 277H929V282H924ZM924 277L929 282M929 277L924 282" />
      <path d="M48.5 482.5H56.5V489.5H48.5ZM52.5 486V448M49.5 448.5L52.5 439L55.5 448.5ZM53 485.5H90M90.5 482.5L99.5 485.5L90.5 488.5Z" />
    </g>
    <g fill="#d0d0d0" fontFamily="Liberation Sans" fontSize="12" textAnchor="middle">
      <text x="53.5" y="432">Y</text>
      <text x="110.5" y="490">X</text>
    </g>
  </Canvas>
);

const menus = ["Soubor", "Upravit", "Zobrazit", "Vložit", "Formát", "Nástroje", "Kresli", "Kóty", "Modifikace", "Okno", "Nápověda"];

const Glyph = ({ d, c = "#111", w = 1.5, f = "none" }: { d: string; c?: string; w?: number; f?: string }) => (
  <svg width="10" height="10" viewBox="0 0 10 10" aria-hidden="true">
    <path d={d} stroke={c} strokeWidth={w} fill={f} />
  </svg>
);

export default function App() {
  return (
    <Window>
      <Global />
      <TitleBar>
        <Icon name="cad" />
        <Title>AutoCAD 2007 - [G:\priruba_sr-rb awd4.dwg]</Title>
        <WinButtons>
          <WinButton aria-label="Minimalizovat"><Glyph d="M1 8H6" c="#fff" w={2} /></WinButton>
          <WinButton aria-label="Obnovit"><Glyph d="M3.5 3V1.5H8.5V6.5H7M1.5 4H6.5V8.5H1.5ZM1.5 4.5H6.5" c="#fff" w={1} /></WinButton>
          <WinButton $close aria-label="Zavřít"><Glyph d="M1.5 1.5L8.5 8.5M8.5 1.5L1.5 8.5" c="#fff" w={2} /></WinButton>
        </WinButtons>
      </TitleBar>
      <MenuBar>
        <Icon name="doc" />
        {menus.map((m) => <MenuItem key={m}>{m}</MenuItem>)}
        <Spacer />
        <MdiButton aria-label="Minimalizovat výkres"><Glyph d="M3 7.5H7" /></MdiButton>
        <MdiButton aria-label="Obnovit výkres"><Glyph d="M4 3.5V2H8.5V6H7M2 4.5H6.5V8H2Z" w={1} c="#444" /></MdiButton>
        <MdiButton aria-label="Zavřít výkres"><Glyph d="M2.5 2.5L7.5 7.5M7.5 2.5L2.5 7.5" /></MdiButton>
      </MenuBar>

      <ToolRows>
        <ToolRow>
          <Toolbar>
            <Grip />
            <Tools names="new open save | print preview publish web | cut copy paste brush blockEdit | undo down redo downOff | pan zoomRt zoomWin zoomPrev | props design palettes sheet markup calc | help" />
          </Toolbar>
          <Toolbar>
            <Grip />
            <Tools names="styleA" />
            <Combo w={76} value="Standard" label="Styl textu" />
            <Tools names="dimStyle" />
            <Combo w={76} value="ISO-25" label="Kótovací styl" />
            <Tools names="tableStyle" />
            <Combo w={76} value="Standard" label="Styl tabulky" />
          </Toolbar>
        </ToolRow>
        <ToolRow>
          <Toolbar>
            <Grip />
            <Tools names="layers" />
            <Combo w={226} value="0" label="Hladina" tight>
              <LayerStates>{["bulb", "sun", "vpFreeze", "lock", "layColor"].map((n) => <Icon key={n} name={n} />)}</LayerStates>
            </Combo>
            <Tools names="layerCur layerPrev" />
          </Toolbar>
          <Toolbar>
            <Grip />
            <Combo w={113} value="Fialová" label="Barva"><Swatch /></Combo>
            <Combo w={120} value="DleHlad" label="Typ čáry"><LineSample $w={44} /></Combo>
            <Combo w={94} value="DleHlad" label="Tloušťka čáry"><LineSample $w={26} /></Combo>
            <Combo w={92} value="DleBarvy" label="Styl vykreslování" off />
          </Toolbar>
        </ToolRow>
        <ToolRow>
          <Toolbar>
            <Grip />
            <Tools names="dimLinear dimAligned dimArc dimOrd | dimRad dimJog dimDia dimAng | quickDim dimBase dimCont | leader tol centre | dimEdit dimTedit dimUpd" />
            <Combo w={76} value="ISO-25" label="Styl kót" lead tight />
            <Tools names="dimStyle" />
          </Toolbar>
          <Toolbar>
            <Grip />
            <Tools names="grpA grpB grpC grpD" />
          </Toolbar>
          <Toolbar>
            <Grip />
            <Tools names="text textLine textEdit textFind styleA textScale textJust spaceTr" />
          </Toolbar>
          <Toolbar>
            <Grip />
            <Tools names="cornerA box boxL blkA blkB |" />
            <Combo w={76} value="" label="Reference" off />
          </Toolbar>
        </ToolRow>
      </ToolRows>

      <Workspace>
        <Dock>
          <Toolbar $vertical>
            <Grip $vertical />
            <Tools names="distance area mass | list locate" vertical />
          </Toolbar>
          <Toolbar $vertical>
            <Grip $vertical />
            <ToolStack>
              <Tools names="line xline pline polygon rect arc circle cloud spline ellipse ellArc insBlk mkBlk point hatch gradient region table text" vertical />
            </ToolStack>
          </Toolbar>
        </Dock>
        <Center>
          <Drawing />
          <TabStrip>
            <NavButton aria-label="První"><Glyph d="M2 2V8M7 2V8L3.5 5Z" f="#111" w={1} /></NavButton>
            <NavButton aria-label="Předchozí"><Glyph d="M6 2V8L3 5Z" f="#111" w={1} /></NavButton>
            <NavButton aria-label="Další"><Glyph d="M4 2V8L7 5Z" f="#111" w={1} /></NavButton>
            <NavButton aria-label="Poslední"><Glyph d="M8 2V8M3 2V8L6.5 5Z" f="#111" w={1} /></NavButton>
            <Tab $active>Model</Tab>
            <Tab>Layout1</Tab>
            <Tab>Layout2</Tab>
          </TabStrip>
        </Center>
        <Dock $right>
          <TipAnchor>
            <Toolbar $vertical>
              <Grip $vertical />
              <ToolStack>
                <Tools names="erase copyObj mirror offset array move rotate scale stretch trim extend breakPt breakObj join chamfer fillet explode" vertical />
              </ToolStack>
            </Toolbar>
            <Tip role="tooltip">Prodluž</Tip>
          </TipAnchor>
          <Toolbar $vertical>
            <Grip $vertical />
            <ToolStack><Tools names="ordA ordB ordC ordD" vertical /></ToolStack>
          </Toolbar>
        </Dock>
      </Workspace>

      <Command>
        <CommandGrip />
        <CommandBox>
          <CommandLine>
            <History>Příkaz: *Storno*</History>
            <Stepper>
              <ScrollButton aria-label="Nahoru"><svg width="5" height="3"><path d="M0 3L2.5 0L5 3Z" fill="#34579c" /></svg></ScrollButton>
              <ScrollButton aria-label="Dolů"><svg width="5" height="3"><path d="M0 0L2.5 3L5 0Z" fill="#34579c" /></svg></ScrollButton>
            </Stepper>
          </CommandLine>
          <CommandLine>
            <Prompt htmlFor="cmd">Příkaz:</Prompt>
            <PromptInput id="cmd" />
            <HScroll>
              <ScrollButton aria-label="Vlevo"><Glyph d="M6.5 2L3.5 5L6.5 8" c="#34579c" /></ScrollButton>
              <HThumb />
              <ScrollButton aria-label="Vpravo"><Glyph d="M3.5 2L6.5 5L3.5 8" c="#34579c" /></ScrollButton>
            </HScroll>
          </CommandLine>
        </CommandBox>
      </Command>
      <StatusBar>{"Dotáhne objekt k dotyku s jiným objektem:  PRODLUŽ"}</StatusBar>

      <Taskbar>
        <Start>
          <svg width="14" height="14" viewBox="0 0 14 14" aria-hidden="true">
            <path d="M1.5 3Q4 1 6.5 2.5L5.5 6.5Q3.5 5 .5 6.5Z" fill="#f0582a" />
            <path d="M7.5 3Q10 4 13 2.5L12 6.5Q9 8 6.5 7Z" fill="#8fd14b" />
            <path d="M.5 7.5Q3 6 5.5 7.5L4.5 11.5Q2.5 10 0 11.5Z" fill="#5b9df5" />
            <path d="M6.5 8Q9 9 12 7.5L11 11.5Q8 13 5.500 12Z" fill="#fbd13c" />
          </svg>
          Start
        </Start>
        <Dots />
        <QuickLaunch>
          {["qCad", "qMail", "qMedia", "qDesk", "qIe", "qFox", "qShield"].map((n) => (
            <QuickButton key={n} aria-label={n}><Icon name={n} /></QuickButton>
          ))}
        </QuickLaunch>
        <Dots />
        <TaskList>
          <Task><Icon name="folder" />nosník spodní 200sx ...</Task>
          <Task><Icon name="disk" />Vyměnitelný disk (G:)</Task>
          <Task $active><Icon name="cad" />AutoCAD 2007 - [G:\...</Task>
          <Task><Icon name="photo" />VANA ADAPTER.JPG ...</Task>
        </TaskList>
        <Dots />
        <Language>CS</Language>
        <Tray>
          <TrayToggle aria-label="Skryté ikony"><Glyph d="M6.5 2L3.5 5L6.5 8" c="#fff" /></TrayToggle>
          <Icon name="tUsb" />
          <Icon name="tNet" />
          <Clock>16:53</Clock>
        </Tray>
      </Taskbar>
    </Window>
  );
}
